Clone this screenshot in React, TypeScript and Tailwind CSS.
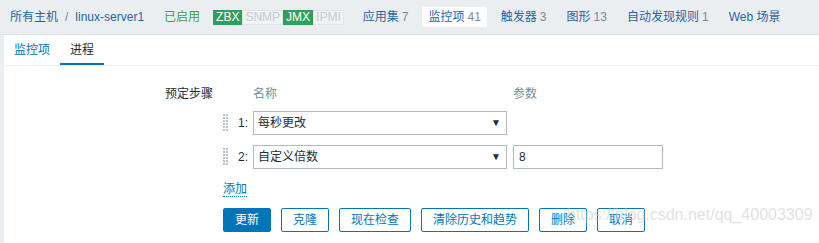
import React from "react";

const font = { fontFamily: '"Liberation Sans", "Noto Sans CJK SC", sans-serif' };

function Tag({ label, on }: { label: string; on: boolean }) {
  return (
    <span
      className={
        on
          ? "h-[15px] px-[2px] flex items-center bg-[#2f9f5e] text-white border border-[#2f9f5e]"
          : "h-[15px] px-[2px] flex items-center bg-[#f0f2f3] text-[#c3ccd1] border border-[#dfe4e7]"
      }
    >
      {label}
    </span>
  );
}

function NavItem({ name, count, active }: { name: string; count?: string; active?: boolean }) {
  return (
    <span
      className={
        "h-[20px] px-[6px] flex items-center " +
        (active ? "bg-white rounded-[2px]" : "")
      }
    >
      <span className="text-[#1f65a6]">{name}</span>
      {count && <span className="text-[#768d99] ml-[3px]">{count}</span>}
    </span>
  );
}

function Handle() {
  return (
    <svg width="5" height="18" viewBox="0 0 5 18" className="shrink-0">
      {[0, 3, 6, 9, 12, 15].map((y) => (
        <g key={y} fill="#b8c4ca">
          <rect x="0" y={y} width="2" height="2" />
          <rect x="3" y={y} width="2" height="2" />
        </g>
      ))}
    </svg>
  );
}

function Select({ value }: { value: string }) {
  return (
    <div className="w-[254px] h-[24px] border border-[#acbbc2] flex items-center justify-between pl-[4px] pr-[5px] text-[#1f2c33]">
      <span>{value}</span>
      <span className="text-[10px] text-[#1f2c33]">▼</span>
    </div>
  );
}

function Btn({ label, primary }: { label: string; primary?: boolean }) {
  return (
    <button
      className={
        "h-[24px] px-[11px] border rounded-[2px] " +
        (primary
          ? "bg-[#0275b8] border-[#0275b8] text-white"
          : "bg-white border-[#0275b8] text-[#0275b8]")
      }
    >
      {label}
    </button>
  );
}

export default function App() {
  return (
    <div className="relative w-[819px] h-[243px] overflow-hidden bg-[#ebeef0] text-[12px] leading-[16px]" style={font}>
      {/* header */}
      <div className="h-[35px] flex items-center pl-[10px] border-b border-[#dfe4e7]">
        <span className="text-[#1f65a6]">所有主机</span>
        <span className="text-[#768d99] mx-[7px]">/</span>
        <span className="text-[#1f65a6]">linux-server1</span>
        <span className="text-[#429e47] ml-[20px]">已启用</span>
        <div className="flex ml-[13px]">
          <Tag label="ZBX" on />
          <Tag label="SNMP" on={false} />
          <Tag label="JMX" on />
          <Tag label="IPMI" on={false} />
        </div>
        <div className="flex items-center gap-[8px] ml-[13px]">
          <NavItem name="应用集" count="7" />
          <NavItem name="监控项" count="41" active />
          <NavItem name="触发器" count="3" />
          <NavItem name="图形" count="13" />
          <NavItem name="自动发现规则" count="1" />
          <NavItem name="Web 场景" />
        </div>
      </div>

      {/* panel */}
      <div className="ml-[4px] bg-white h-[300px]">
        <div className="flex h-[31px] border-b border-[#ebeef0]">
          <span className="px-[10px] flex items-center text-[#0275b8]">监控项</span>
          <span className="px-[10px] flex items-center text-[#1f2c33] border-b-[2px] border-[#0275b8] pt-[2px]">进程</span>
        </div>

        <div className="flex pt-[20px]">
          <div className="w-[209px] text-right text-[#1f2c33]">预定步骤</div>
          <div className="pl-[10px]">
            <div className="flex h-[16px] text-[#768d99]">
              <span className="ml-[30px] w-[260px]">名称</span>
              <span>参数</span>
            </div>

            <div className="flex items-center mt-[9px] h-[24px]">
              <Handle />
              <span className="w-[20px] text-right text-[#1f2c33]">1:</span>
              <span className="ml-[5px]">
                <Select value="每秒更改" />
              </span>
            </div>

            <div className="flex items-center mt-[10px] h-[24px]">
              <Handle />
              <span className="w-[20px] text-right text-[#1f2c33]">2:</span>
              <span className="ml-[5px]">
                <Select value="自定义倍数" />
              </span>
              <div className="ml-[6px] w-[150px] h-[24px] border border-[#acbbc2] flex items-center pl-[5px] text-[#1f2c33]">
                8
              </div>
            </div>

            <div className="mt-[12px] h-[16px]">
              <span className="text-[#0275b8] border-b border-dotted border-[#0275b8]">添加</span>
            </div>

            <div className="flex gap-[10px] mt-[11px]">
              <Btn label="更新" primary />
              <Btn label="克隆" />
              <Btn label="现在检查" />
              <Btn label="清除历史和趋势" />
              <Btn label="删除" />
              <Btn label="取消" />
            </div>
          </div>
        </div>
      </div>

      {/* watermark */}
      <span
        className="absolute left-[567px] top-[205px] text-[16px] leading-[20px] text-[rgba(200,200,200,0.55)]"
        style={{ fontFamily: '"Liberation Sans", sans-serif' }}
      >
        https://blog.csdn.net/qq_40003309
      </span>
    </div>
  );
}
